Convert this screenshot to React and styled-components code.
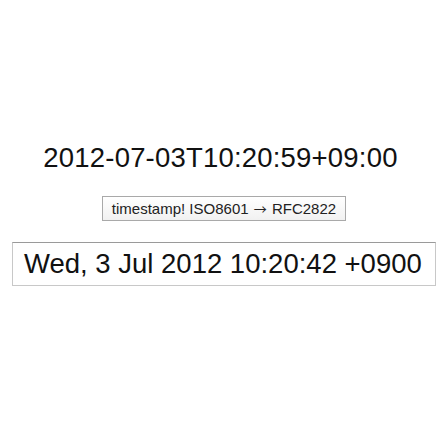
import React from "react";
import styled, { createGlobalStyle } from "styled-components";

const Global = createGlobalStyle`
  html, body {
    margin: 0;
    padding: 0;
    background: #fff;
  }
  body {
    font-family: "Liberation Sans", "Noto Sans CJK JP", Arial, sans-serif;
    color: #111;
  }
`;

const Page = styled.div`
  width: 448px;
  height: 448px;
  display: flex;
  flex-direction: column;
  align-items: center;
  padding-top: 142px;
  box-sizing: border-box;
`;

const Source = styled.div`
  font-size: 27.5px;
  line-height: 32px;
  letter-spacing: 0.2px;
  text-align: center;
  padding-right: 7px;
`;

const ConvertButton = styled.button`
  margin-top: 22px;
  width: 244px;
  height: 25px;
  padding: 0;
  font-family: inherit;
  font-size: 15px;
  line-height: 23px;
  color: #222;
  background: linear-gradient(#ffffff, #f1f1f1);
  border: 1px solid #a9a9a9;
  border-radius: 0;
`;

const Arrow = styled.span`
  font-family: "Noto Sans CJK JP", sans-serif;
  font-size: 13px;
  margin: 0 1px;
`;

const Output = styled.div`
  margin-top: 21px;
  width: 424px;
  height: 44px;
  box-sizing: border-box;
  border: 1px solid #c8c8c8;
  border-top-color: #9a9a9a;
  font-size: 27.5px;
  line-height: 42px;
  padding-left: 11px;
  text-align: left;
  color: #111;
`;

export default function App() {
  return (
    <>
      <Global />
      <Page>
        <Source>2012-07-03T10:20:59+09:00</Source>
        <ConvertButton>
          timestamp! ISO8601 <Arrow>→</Arrow> RFC2822
        </ConvertButton>
        <Output>Wed, 3 Jul 2012 10:20:42 +0900</Output>
      </Page>
    </>
  );
}
